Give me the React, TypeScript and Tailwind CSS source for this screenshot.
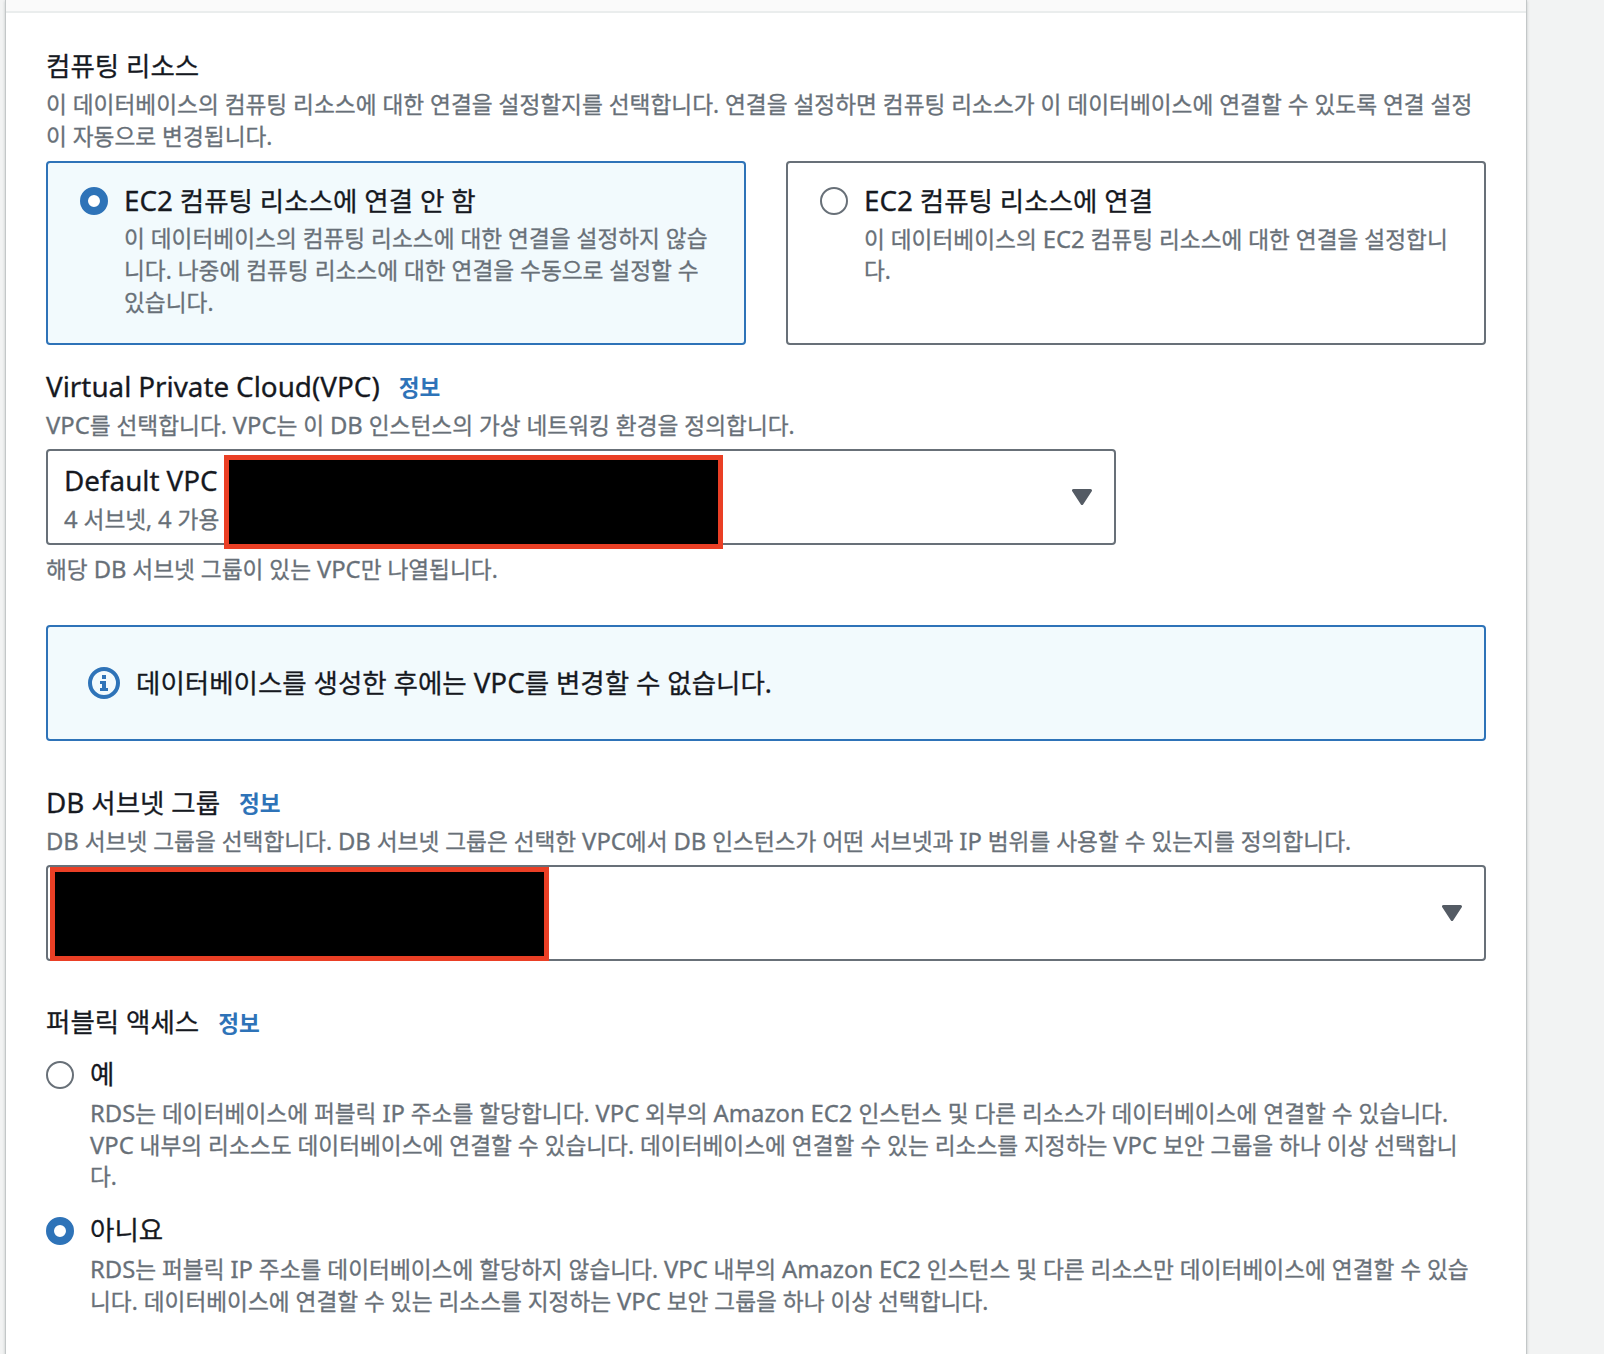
import { Fragment, type ReactNode } from "react";
import clsx from "clsx";

// Latin glyphs run slightly larger than the Hangul around them
function Mixed({ text }: { text: string }) {
  return (
    <>
      {text.split(/([A-Za-z0-9()]+)/).map((part, i) =>
        i % 2 ? (
          <span key={i} className="text-[1.05em]">
            {part}
          </span>
        ) : (
          <Fragment key={i}>{part}</Fragment>
        )
      )}
    </>
  );
}

function Title({ text, info }: { text: string; info?: boolean }) {
  return (
    <div className="flex h-11 items-center whitespace-pre pb-0.5 text-[26.5px] leading-[44px] text-[#16191f]">
      <span className="[-webkit-text-stroke:0.3px]">
        <Mixed text={text} />
      </span>
      {info && (
        <a className="ml-[19px] mt-1 text-[22.6px] font-bold text-[#2e73b8]">
          정보
        </a>
      )}
    </div>
  );
}

function Description({ lines }: { lines: string[] }) {
  return (
    <div className="text-[22.68px] leading-8 text-[#687078] [-webkit-text-stroke:0.3px]">
      {lines.map((line) => (
        <div key={line} className="h-8 whitespace-pre">
          <Mixed text={line} />
        </div>
      ))}
    </div>
  );
}

function Radio({ checked }: { checked?: boolean }) {
  return (
    <div
      className={clsx(
        "mt-2 size-7 shrink-0 rounded-full bg-white",
        checked ? "border-8 border-[#2e73b8]" : "border-2 border-[#687078]"
      )}
    />
  );
}

type OptionProps = { title: string; lines: string[]; checked?: boolean };

function Option({ title, lines, checked }: OptionProps) {
  return (
    <div className="flex gap-4">
      <Radio checked={checked} />
      <div>
        <Title text={title} />
        <Description lines={lines} />
      </div>
    </div>
  );
}

function Tile(props: OptionProps) {
  return (
    <div
      className={clsx(
        "h-[184px] flex-1 rounded-[4px] border-2 px-8 py-4",
        props.checked
          ? "border-[#2e73b8] bg-[#f2fafd]"
          : "border-[#687078] bg-white"
      )}
    >
      <Option {...props} />
    </div>
  );
}

function Select({ className, children }: { className?: string; children?: ReactNode }) {
  return (
    <div
      className={clsx(
        "relative mt-2 flex h-24 items-center rounded-[4px] border-2 border-[#687078] bg-white pl-4 pr-[22px]",
        className
      )}
    >
      <div className="flex-1">{children}</div>
      <svg width="20" height="16" viewBox="0 0 20 16">
        <path
          d="M1.5 1.5h17L10 14.5z"
          fill="#545b64"
          stroke="#545b64"
          strokeWidth="3"
          strokeLinejoin="round"
        />
      </svg>
    </div>
  );
}

export default function App() {
  return (
    <div className="flex h-[1354px] w-[1604px] overflow-hidden bg-[#f2f3f3] pl-1.5 font-['Noto_Sans','Noto_Sans_CJK_KR',sans-serif]">
      <div className="w-[1520px] bg-white shadow-[0_0_0_1px_#c3c7c8,0_2px_3px_1px_rgba(0,28,36,0.2)]">
        <div className="h-[13px] border-b-2 border-[#eaeded] bg-[#fafafa]" />
        <div className="px-10 pt-8">
          <Title text="컴퓨팅 리소스" />
          <Description
            lines={[
              "이 데이터베이스의 컴퓨팅 리소스에 대한 연결을 설정할지를 선택합니다. 연결을 설정하면 컴퓨팅 리소스가 이 데이터베이스에 연결할 수 있도록 연결 설정",
              "이 자동으로 변경됩니다.",
            ]}
          />
          <div className="mt-2 flex gap-10">
            <Tile
              checked
              title="EC2 컴퓨팅 리소스에 연결 안 함"
              lines={[
                "이 데이터베이스의 컴퓨팅 리소스에 대한 연결을 설정하지 않습",
                "니다. 나중에 컴퓨팅 리소스에 대한 연결을 수동으로 설정할 수",
                "있습니다.",
              ]}
            />
            <Tile
              title="EC2 컴퓨팅 리소스에 연결"
              lines={[
                "이 데이터베이스의 EC2 컴퓨팅 리소스에 대한 연결을 설정합니",
                "다.",
              ]}
            />
          </div>

          <div className="mt-5">
            <Title text="Virtual Private Cloud(VPC)" info />
            <Description
              lines={["VPC를 선택합니다. VPC는 이 DB 인스턴스의 가상 네트워킹 환경을 정의합니다."]}
            />
            <Select className="w-[1070px]">
              <Title text="Default VPC" />
              <Description lines={["4 서브넷, 4 가용"]} />
              <div className="absolute left-44 top-1 h-[94px] w-[499px] border-[5px] border-[#ea3f25] bg-black" />
            </Select>
            <div className="mt-2">
              <Description lines={["해당 DB 서브넷 그룹이 있는 VPC만 나열됩니다."]} />
            </div>
          </div>

          <div className="mt-10 flex h-[116px] items-center gap-4 rounded-[4px] border-2 border-[#2e73b8] bg-[#f2fafd] px-10">
            <svg width="32" height="32" viewBox="0 0 32 32" fill="none">
              <circle cx="16" cy="16" r="14" stroke="#2e73b8" strokeWidth="4" />
              <path
                d="M14 8h4v4h-4zM12 14h6v7h2v3h-8v-3h2v-4h-2z"
                fill="#2e73b8"
              />
            </svg>
            <Title text="데이터베이스를 생성한 후에는 VPC를 변경할 수 없습니다." />
          </div>

          <div className="mt-10">
            <Title text="DB 서브넷 그룹" info />
            <Description
              lines={[
                "DB 서브넷 그룹을 선택합니다. DB 서브넷 그룹은 선택한 VPC에서 DB 인스턴스가 어떤 서브넷과 IP 범위를 사용할 수 있는지를 정의합니다.",
              ]}
            />
            <Select>
              <div className="absolute left-0.5 top-0 h-[94px] w-[499px] border-[5px] border-[#ea3f25] bg-black" />
            </Select>
          </div>

          <div className="mt-10">
            <Title text="퍼블릭 액세스" info />
            <div className="mt-2 flex flex-col gap-4">
              <Option
                title="예"
                lines={[
                  "RDS는 데이터베이스에 퍼블릭 IP 주소를 할당합니다. VPC 외부의 Amazon EC2 인스턴스 및 다른 리소스가 데이터베이스에 연결할 수 있습니다.",
                  "VPC 내부의 리소스도 데이터베이스에 연결할 수 있습니다. 데이터베이스에 연결할 수 있는 리소스를 지정하는 VPC 보안 그룹을 하나 이상 선택합니",
                  "다.",
                ]}
              />
              <Option
                checked
                title="아니요"
                lines={[
                  "RDS는 퍼블릭 IP 주소를 데이터베이스에 할당하지 않습니다. VPC 내부의 Amazon EC2 인스턴스 및 다른 리소스만 데이터베이스에 연결할 수 있습",
                  "니다. 데이터베이스에 연결할 수 있는 리소스를 지정하는 VPC 보안 그룹을 하나 이상 선택합니다.",
                ]}
              />
            </div>
          </div>
        </div>
      </div>
    </div>
  );
}
